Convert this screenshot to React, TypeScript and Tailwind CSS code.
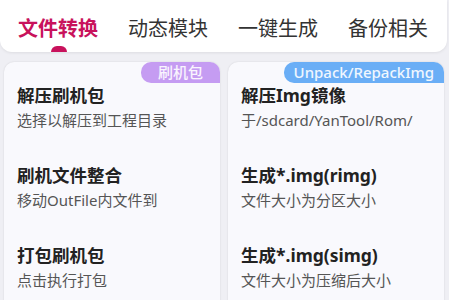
import React from "react"

type Item = { title: string; desc: string }

const tabs = ["文件转换", "动态模块", "一键生成", "备份相关"]

const leftItems: Item[] = [
  { title: "解压刷机包", desc: "选择以解压到工程目录" },
  { title: "刷机文件整合", desc: "移动OutFile内文件到" },
  { title: "打包刷机包", desc: "点击执行打包" },
]

const rightItems: Item[] = [
  { title: "解压Img镜像", desc: "于/sdcard/YanTool/Rom/" },
  { title: "生成*.img(rimg)", desc: "文件大小为分区大小" },
  { title: "生成*.img(simg)", desc: "文件大小为压缩后大小" },
]

function Card({ badge, badgeClass, items }: { badge: string; badgeClass: string; items: Item[] }) {
  return (
    <div className="relative h-[260px] rounded-[10px] bg-[#f9f9fd] shadow-[0_0_2px_rgba(0,0,0,0.12)] pt-[21px] pl-[13px]">
      <span
        className={`absolute right-0 top-0 h-[21px] rounded-l-[10px] rounded-tr-[10px] text-[15px] leading-[21px] text-white/90 font-medium ${badgeClass}`}
      >
        {badge}
      </span>
      {items.map((it) => (
        <div key={it.title} className="flex h-20 flex-col">
          <span className="text-[17.5px] font-bold leading-6 text-[#222]">{it.title}</span>
          <span className="mt-px text-[15px] leading-6 text-[#555]">{it.desc}</span>
        </div>
      ))}
    </div>
  )
}

export default function App() {
  return (
    <div className="h-[300px] w-[449px] overflow-hidden bg-[#efeff4] font-['Noto_Sans','Noto_Sans_CJK_SC',sans-serif]">
      {/* Tabs */}
      <div className="mr-[2px] flex h-[52px] gap-[30px] rounded-b-[12px] bg-white pl-[18px] shadow-[0_1px_3px_rgba(0,0,0,0.08)]">
        {tabs.map((t, i) => (
          <div key={t} className="flex h-full flex-col items-center">
            <span
              className={`pt-[15px] text-[20px] leading-7 ${
                i === 0 ? "font-bold text-[#c8125c]" : "text-[#333]"
              }`}
            >
              {t}
            </span>
            {i === 0 && <span className="mt-auto ml-[2px] h-[6px] w-4 rounded-t-full bg-[#c8125c]" />}
          </div>
        ))}
      </div>

      {/* Cards */}
      <div className="mt-[10px] grid grid-cols-2 gap-2 pl-1 pr-[5px]">
        <Card badge="刷机包" badgeClass="bg-[#c59cf2] px-[17px]" items={leftItems} />
        <Card badge="Unpack/RepackImg" badgeClass="bg-[#6aaef6] px-[10px]" items={rightItems} />
      </div>
    </div>
  )
}
